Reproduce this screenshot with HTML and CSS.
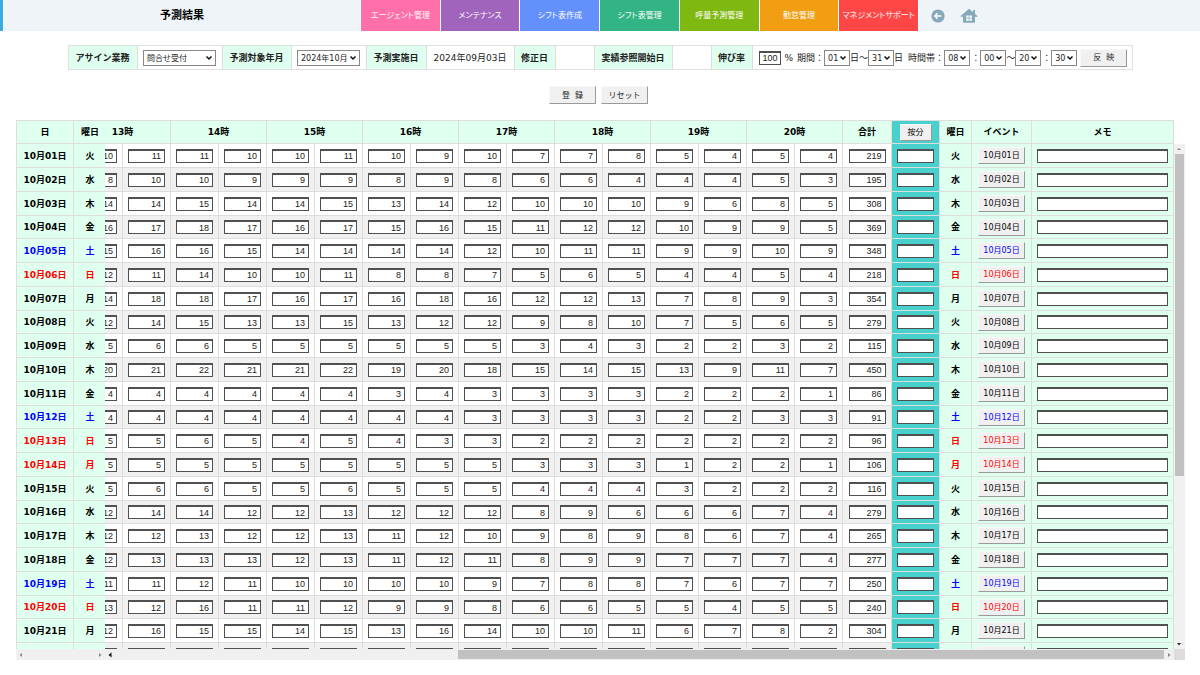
FILE: index.html
```html
<!DOCTYPE html>
<html lang="ja">
<head>
<meta charset="utf-8">
<title>予測結果</title>
<link rel="stylesheet" href="styles.css">
</head>
<body>
<header class="topbar">
  <h1 class="title">予測結果</h1>
  <nav class="menu">
    <a class="menu-item pink" href="#">エージェント管理</a>
    <a class="menu-item purple" href="#">メンテナンス</a>
    <a class="menu-item blue" href="#">シフト表作成</a>
    <a class="menu-item green" href="#">シフト表管理</a>
    <a class="menu-item lime" href="#">呼量予測管理</a>
    <a class="menu-item orange" href="#">勤怠管理</a>
    <a class="menu-item red" href="#">マネジメントサポート</a>
  </nav>
  <div class="tools">
    <a href="#" aria-label="戻る"><svg width="14" height="14" viewBox="0 0 14 14"><circle cx="7" cy="7" r="6.6" fill="#86a9b9"/><path d="M10.4 7H4M6.6 4.2L3.8 7l2.8 2.8" fill="none" stroke="#fff" stroke-width="1.4"/></svg></a>
    <a href="#" aria-label="ホーム"><svg width="18" height="16" viewBox="0 0 18 16"><path d="M9 .8L3.2 5.8 .6 8v.7H3V14.8h12V8.7h2.400V8l-2.400-2.100V2h-2v2.200z" fill="#86a9b9"/><path d="M6.2 7.6h2.5v2.2H6.2zM9.4 7.6h2.5v2.2H9.4zM6.2 10.5h2.5v2.2H6.2zM9.4 10.5h2.5v2.2H9.4z" fill="#fff"/></svg></a>
  </div>
</header>

<main>
  <form class="form">
    <table class="filter">
      <tr>
        <th class="w-label"><label for="task">アサイン業務</label></th>
        <td class="w-task"><select class="sel sel-task" id="task"><option>問合せ受付</option></select></td>
        <th class="w-label"><label for="month">予測対象年月</label></th>
        <td class="w-month"><select class="sel sel-month" id="month"><option>2024年10月</option></select></td>
        <th class="w-run">予測実施日</th>
        <td class="w-date">2024年09月03日</td>
        <th class="w-short">修正日</th>
        <td class="w-blank"></td>
        <th class="w-start">実績参照開始日</th>
        <td class="w-blank"></td>
        <th class="w-short"><label for="rate">伸び率</label></th>
        <td class="w-range">
          <div class="range">
            <input class="num rate" id="rate" value="100">
            <span class="pct">%</span>
            <span>期間：</span>
            <select class="sel" aria-label="開始日"><option>01</option></select>
            <span>日～</span>
            <select class="sel" aria-label="終了日"><option>31</option></select>
            <span class="unit">日</span>
            <span>時間帯：</span>
            <select class="sel" aria-label="開始時"><option>08</option></select>
            <span class="colon">：</span>
            <select class="sel" aria-label="開始分"><option>00</option></select>
            <span>～</span>
            <select class="sel" aria-label="終了時"><option>20</option></select>
            <span class="colon">：</span>
            <select class="sel" aria-label="終了分"><option>30</option></select>
            <button class="btn apply" type="button">反&nbsp; 映</button>
          </div>
        </td>
      </tr>
    </table>
    <div class="actions">
      <button class="btn" type="button">登&nbsp; 録</button>
      <button class="btn" type="reset">リセット</button>
    </div>
  </form>

  <section class="sheet">
    <div class="pane">
      <table class="grid frozen">
        <thead><tr><th class="c-day">日</th><th>曜日</th></tr></thead>
        <tbody id="days"></tbody>
      </table>
    </div>
    <div class="pane scrolled">
      <table class="grid data">
        <colgroup>
          <col class="c-slot" span="16"><col class="c-total"><col class="c-slot"><col class="c-week"><col class="c-event"><col>
        </colgroup>
        <thead>
          <tr>
            <th colspan="2">13時</th><th colspan="2">14時</th><th colspan="2">15時</th><th colspan="2">16時</th>
            <th colspan="2">17時</th><th colspan="2">18時</th><th colspan="2">19時</th><th colspan="2">20時</th>
            <th>合計</th>
            <th class="teal"><button class="btn split" type="button">按分</button></th>
            <th>曜日</th><th>イベント</th><th>メモ</th>
          </tr>
        </thead>
        <tbody id="slots"></tbody>
      </table>
    </div>
    <div class="vbar">
      <svg class="arrow" viewBox="0 0 10 10"><path d="M3 6l2-2 2 2z" fill="#888"/></svg>
      <div class="vthumb"></div>
      <svg class="arrow end" viewBox="0 0 10 10"><path d="M3 4h4L5 6.5z" fill="#222"/></svg>
    </div>
    <div class="hbar">
      <svg class="arrow" viewBox="0 0 10 10"><path d="M6 3v4L3.5 5z" fill="#888"/></svg>
      <svg class="arrow end" viewBox="0 0 10 10"><path d="M4 3v4l2.5-2z" fill="#888"/></svg>
    </div>
    <div class="hbar">
      <svg class="arrow" viewBox="0 0 10 10"><path d="M6.5 2.5v5L3.5 5z" fill="#111"/></svg>
      <div class="hthumb"></div>
      <svg class="arrow" viewBox="0 0 10 10"><path d="M4 3v4l2.5-2z" fill="#888"/></svg>
    </div>
    <div class="corner"></div>
  </section>
</main>
<script src="script.js"></script>
</body>
</html>
```

FILE: styles.css
```css
* { box-sizing: border-box; }

body {
  margin: 0;
  background: #fff;
  color: #222;
  font: 9px/14px "DejaVu Sans", "Noto Sans CJK JP", sans-serif;
}

input, select, button { margin: 0; font-family: inherit; color: inherit; }

/* Top bar */
.topbar {
  display: flex;
  height: 31px;
  background: #eff4f8;
  border-left: 3px solid #38ade3;
}
.title {
  width: 357px;
  margin: 0;
  border-left: 1px solid #fff;
  font-size: 11px;
  line-height: 32px;
  text-align: center;
  color: #000;
}
.menu { display: flex; width: 559px; gap: 1px; padding: 0 1px; background: #fff; }
.menu-item {
  flex: 1 1 0;
  min-width: 0;
  display: flex;
  justify-content: center;
  align-items: center;
  font-size: 8px;
  font-feature-settings: "palt";
  white-space: nowrap;
  color: #fff;
  text-decoration: none;
}
.pink { background: #ff6fa9; }
.purple { background: #a164bd; }
.blue { background: #6490fb; }
.green { background: #33b484; }
.lime { background: #80b812; }
.orange { background: #f19e12; }
.red { background: #ff4646; }
.tools { display: flex; align-items: center; gap: 15px; padding-left: 12px; }
.tools a { display: flex; }

/* Filter row */
.form { display: flex; flex-direction: column; align-items: center; padding-top: 14px; }
.filter {
  border-collapse: separate;
  border-spacing: 0;
  border: 1px solid #e0e0e0;
  table-layout: fixed;
  width: 1065px;
  height: 25px;
}
.filter th, .filter td {
  padding: 0;
  border-right: 1px solid #ddd;
  text-align: center;
  white-space: nowrap;
}
.filter th { background: #dfffef; }
.filter td:last-child { border-right: 0; }
.w-label { width: 69px; }
.w-task { width: 85px; }
.w-month { width: 75px; }
.w-run { width: 60px; }
.w-date { width: 88px; }
.w-short { width: 41px; }
.w-blank { width: 39px; }
.w-start { width: 78px; }
.range { display: flex; align-items: center; padding-left: 6px; }
.range span { flex: none; }
.range .pct { margin: 0 4px; }
.range .unit { margin-right: 5px; }
.range .colon { padding-left: 1px; }

.sel {
  appearance: none;
  width: 26px;
  height: 16px;
  padding: 1px 0 0 3px;
  border: 1px solid #888;
  border-radius: 0;
  background: #fff url("data:image/svg+xml,%3Csvg xmlns='http://www.w3.org/2000/svg' width='8' height='6'%3E%3Cpath d='M1.5 1.5L4 4l2.5-2.5' fill='none' stroke='%23111' stroke-width='1.5'/%3E%3C/svg%3E") no-repeat right 2px center;
  font-size: 8px;
}
.sel-task { width: 73px; }
.sel-month { width: 63px; }

.btn {
  width: 47px;
  height: 18px;
  padding: 1px 0 0;
  border: 1px solid #f8f8f8;
  border-right-color: #999;
  border-bottom-color: #999;
  background: #f0f0f0;
  font-size: 8px;
  line-height: 14px;
}
.apply { margin-left: 3px; }
.actions { display: flex; gap: 5px; padding: 16px 3px 16px 0; }

/* Sheet */
.sheet {
  display: grid;
  grid-template-columns: 89px 1fr 11px;
  grid-template-rows: 529px 11px;
  margin: 0 15px 0 16px;
}
.pane { overflow: hidden; min-width: 0; }
.scrolled { display: flex; justify-content: flex-end; }
.grid {
  flex: none;
  border-collapse: separate;
  border-spacing: 0;
  table-layout: fixed;
  color: #000;
}
.frozen { width: 90px; border-left: 1px solid #ddd; }
.data { width: calc(100% + 30px); }
.c-day { width: 57px; }
.c-slot { width: 48px; }
.c-total { width: 49px; }
.c-week { width: 32px; }
.c-event { width: 60px; }
.grid th, .grid td {
  padding: 0;
  border-right: 1px solid #ddd;
  border-bottom: 1px solid #ddd;
  text-align: center;
  white-space: nowrap;
}
.grid th { background: #dfffef; }
.grid thead th { border-top: 1px solid #ddd; }
.grid tr { height: 24px; }
.grid tbody tr:nth-child(4n) { height: 23px; }
.frozen th:last-child { border-right: 0; }
.grid tbody tr:nth-child(even) td { background: #f0f0f0; }
.grid .teal, .grid tbody tr:nth-child(even) .teal { background: #48d1cc; }
.sat { color: #00f; }
.sun { color: #f00; }

.num {
  display: block;
  width: 37px;
  height: 14px;
  margin: 0 auto;
  padding: 0 3px 0 0;
  border: 1px solid #505050;
  border-top: 2px solid #505050;
  border-radius: 0;
  background: #fff;
  color: #222;
  font: 9px/10px "Liberation Sans", sans-serif;
  text-align: right;
}
.memo { width: calc(100% - 10px); }
.rate { width: 22px; margin: 0; padding: 0 2px; }
.grid .btn { display: block; height: 17px; margin: 0 auto; }
.grid .split { width: 32px; }

/* Scroll bars */
.vbar { display: flex; flex-direction: column; margin-top: 24px; background: #f1f1f1; }
.vthumb { height: 322px; margin: 0 1px; background: #c1c1c1; }
.hbar { display: flex; align-items: center; background: #f0f0f0; }
.hthumb { width: 66%; height: 9px; margin-left: auto; background: #c1c1c1; }
.arrow { flex: none; width: 10px; height: 10px; }
.vbar .end { margin-top: auto; }
.hbar .end { margin-left: auto; }
.corner { background: #dcdcdc; }
```

FILE: script.js
```js
// Half-hour forecasts from 13:00 to 20:30, followed by the daily total.
const rows = [
  [10,11,11,10,10,11,10,9,10,7,7,8,5,4,5,4,219],
  [8,10,10,9,9,9,8,9,8,6,6,4,4,4,5,3,195],
  [14,14,15,14,14,15,13,14,12,10,10,10,9,6,8,5,308],
  [16,17,18,17,16,17,15,16,15,11,12,12,10,9,9,5,369],
  [15,16,16,15,14,14,14,14,12,10,11,11,9,9,10,9,348],
  [12,11,14,10,10,11,8,8,7,5,6,5,4,4,5,4,218],
  [14,18,18,17,16,17,16,18,16,12,12,13,7,8,9,3,354],
  [12,14,15,13,13,15,13,12,12,9,8,10,7,5,6,5,279],
  [5,6,6,5,5,5,5,5,5,3,4,3,2,2,3,2,115],
  [20,21,22,21,21,22,19,20,18,15,14,15,13,9,11,7,450],
  [4,4,4,4,4,4,3,4,3,3,3,3,2,2,2,1,86],
  [4,4,4,4,4,4,4,4,3,3,3,3,2,2,3,3,91],
  [5,5,6,5,4,5,4,3,3,2,2,2,2,2,2,2,96],
  [5,5,5,5,5,5,5,5,5,3,3,3,1,2,2,1,106],
  [5,6,6,5,5,6,5,5,5,4,4,4,3,2,2,2,116],
  [12,14,14,12,12,13,12,12,12,8,9,6,6,6,7,4,279],
  [12,12,13,12,12,13,11,12,10,9,8,9,8,6,7,4,265],
  [12,13,13,13,12,13,11,12,11,8,9,9,7,7,7,4,277],
  [11,11,12,11,10,10,10,10,9,7,8,8,7,6,7,7,250],
  [13,12,16,11,11,12,9,9,8,6,6,5,5,4,5,5,240],
  [12,16,15,15,14,15,13,16,14,10,10,11,6,7,8,2,304],
  Array(17).fill("")
];
const names = "火水木金土日月";
const holidays = [14];
let days = "", slots = "";

rows.forEach((values, i) => {
  const n = i + 1;
  const loaded = values[0] !== "";
  const week = loaded ? names[i % 7] : "";
  const date = loaded ? `10月${String(n).padStart(2, "0")}日` : "";
  const tone = i % 7 === 5 || holidays.includes(n) ? "sun" : i % 7 === 4 ? "sat" : "";
  days += `<tr class="${tone}"><th>${date}</th><th>${week}</th></tr>`;
  slots += `<tr>${values.map((v, k) => `<td><input class="num" aria-label="${n}日 ${k + 1}" value="${v}"></td>`).join("")}
    <td class="teal"><input class="num" aria-label="${n}日 按分"></td>
    <th class="${tone}">${week}</th>
    <th class="${tone}"><button class="btn" type="button" aria-label="${n}日 イベント">${date}</button></th>
    <th><input class="num memo" aria-label="${n}日 メモ"></th></tr>`;
});
document.getElementById("days").innerHTML = days;
document.getElementById("slots").innerHTML = slots;
```
